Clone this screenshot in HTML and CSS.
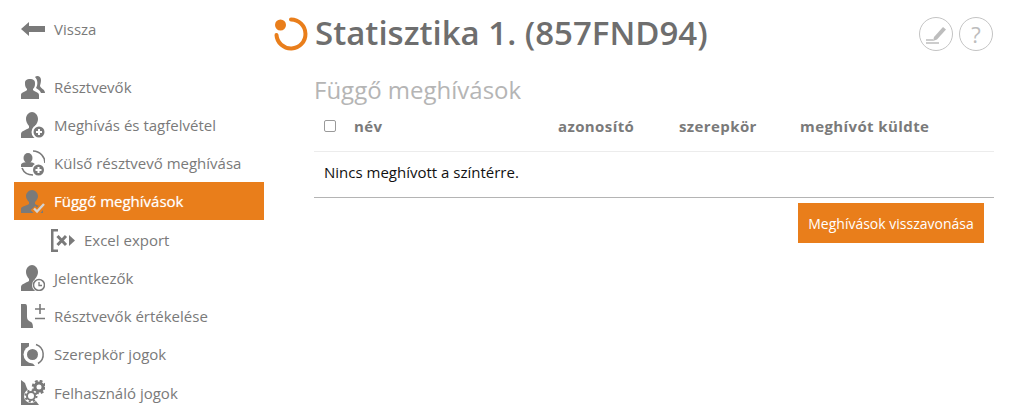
FILE: index.html
```html
<!DOCTYPE html>
<html lang="en">

<head>
    <meta charset="UTF-8">
    <title>Függő meghívások</title>
    <link rel="stylesheet" href="styles.css">
</head>

<body>
    <svg class="defs" width="0" height="0">
        <symbol id="person" viewBox="0 0 24 26">
            <path d="M0 26V22C0 19 5 18 8 16V14C6 12 5 9 5 7C5 3 8 0 11 0S17 3 17 7C17 9 16 12 14 14V16C17 18 22 19 22 22V26Z" />
        </symbol>
    </svg>

    <div class="page">
        <nav class="sidebar">
            <a class="back">
                <svg class="icon" viewBox="0 0 24 26">
                    <path d="M0 13L8 6V10H24V16H8V20Z" />
                </svg>
                Vissza
            </a>

            <ul class="menu">
                <li class="item">
                    <svg class="icon" viewBox="0 0 24 26">
                        <path d="M14 3C16 1 20 2 20 6C20 9 19 11 19 12C20 15 24 15 24 19H20C19 16 16 15 15 14C17 11 17 6 14 3Z" />
                        <path d="M0 25V21C0 18 4 18 6 16V15C4 13 4 11 4 9C4 6 6 5 9 5S14 6 14 9C14 11 14 13 12 15V16C14 18 18 18 18 21V25Z" />
                    </svg>
                    Résztvevők
                </li>
                <li class="item">
                    <svg class="icon" viewBox="0 0 24 26">
                        <use href="#person" />
                        <circle cx="18" cy="20" r="7.5" fill="#fff" />
                        <circle cx="18" cy="20" r="5.5" />
                        <path d="M15 20H21M18 17V23" stroke="#fff" stroke-width="2" />
                    </svg>
                    Meghívás és tagfelvétel
                </li>
                <li class="item">
                    <svg class="icon" viewBox="0 0 24 26">
                        <ellipse cx="7" cy="8" rx="4.500" ry="5" />
                        <path d="M0 17V15C0 13 3 12 7 12S14 13 14 15V17Z" />
                        <path d="M12 1C19 1 24 7 24 13M1 18C3 23 7 25 12 25" fill="none" stroke="#7a7a7a" stroke-width="1.600" />
                        <circle cx="17.500" cy="20" r="7" fill="#fff" />
                        <circle cx="17.500" cy="20" r="5.500" />
                        <path d="M14.500 20H20.500M17.500 17V23" stroke="#fff" stroke-width="2" />
                    </svg>
                    Külső résztvevő meghívása
                </li>
                <li class="item active">
                    <svg class="icon" viewBox="0 0 24 26">
                        <path d="M0 25V21C0 18 5 18 8 16V14C6 12 5 10 5 8C5 5 8 2 11 2S17 5 17 8C17 10 16 12 14 14V16C17 18 22 18 22 21V25Z" />
                        <path d="M12 20L16 24.500L24 15" fill="none" stroke="#e97e1b" stroke-width="6" />
                        <path d="M13 20.500L16 23.500L23 16" fill="none" stroke="#d4d4d4" stroke-width="2.400" />
                    </svg>
                    Függő meghívások
                </li>
                <li class="item sub">
                    <svg class="icon" viewBox="0 0 24 26">
                        <path d="M0 2H7V4.500H2.500V22.500H7V25H0Z" />
                        <path d="M6.500 9L15 18M15 9L6.500 18" fill="none" stroke="#7a7a7a" stroke-width="3" />
                        <path d="M18 8L24 13.500L18 19Z" />
                    </svg>
                    Excel export
                </li>
                <li class="item">
                    <svg class="icon" viewBox="0 0 24 26">
                        <use href="#person" />
                        <circle cx="18" cy="20" r="7" fill="#fff" />
                        <circle cx="18" cy="20" r="5.5" fill="#fff" stroke="#7a7a7a" stroke-width="1.5" />
                        <path d="M18 17V20.500H21" fill="none" stroke="#7a7a7a" stroke-width="1.3" />
                    </svg>
                    Jelentkezők
                </li>
                <li class="item">
                    <svg class="icon" viewBox="0 0 24 26">
                        <path d="M0 1H4C6 1 6 3 6 5V14C6 17 8 18 10 19C12 20 12 24 12 25H0Z" />
                        <path d="M14 6H24M19 1V11M14 15.500H24" fill="none" stroke="#7a7a7a" stroke-width="1.600" />
                    </svg>
                    Résztvevők értékelése
                </li>
                <li class="item">
                    <svg class="icon" viewBox="0 0 24 26">
                        <path d="M0 2H8V18L14 25H0Z" />
                        <circle cx="11.500" cy="13.500" r="9" fill="#fff" />
                        <circle cx="11.500" cy="13.500" r="5.500" />
                        <path d="M15 3.500A10.500 10.500 0 0 1 17 22.500" fill="none" stroke="#7a7a7a" stroke-width="1.500" />
                    </svg>
                    Szerepkör jogok
                </li>
                <li class="item">
                    <svg class="icon" viewBox="0 0 24 26">
                        <path d="M0 0L4 3C5 6 6 9 8 12L18 25H0Z" />
                        <circle cx="10" cy="16" r="7" fill="#fff" />
                        <circle cx="10" cy="16" r="4" fill="none" stroke="#7a7a7a" stroke-width="2" />
                        <circle cx="10" cy="16" r="5.500" fill="none" stroke="#7a7a7a" stroke-width="2" stroke-dasharray="2 2.320" />
                        <circle cx="18" cy="7" r="4" fill="none" stroke="#7a7a7a" stroke-width="3" />
                        <circle cx="18" cy="7" r="6" fill="none" stroke="#7a7a7a" stroke-width="2.500" stroke-dasharray="2.700 2.010" />
                    </svg>
                    Felhasználó jogok
                </li>
            </ul>
        </nav>

        <main class="content">
            <header class="title-row">
                <svg class="logo" viewBox="0 0 34 34">
                    <path d="M17 2.500A14.500 14.500 0 1 1 2.500 18" fill="none" stroke="#e97e1b" stroke-width="4" stroke-linecap="round" />
                    <circle cx="6.500" cy="8" r="5.500" fill="#e97e1b" />
                </svg>
                <h1>Statisztika 1. (857FND94)</h1>
                <div class="tools">
                    <span class="round-btn">
                        <svg viewBox="0 0 24 24" width="24" height="24">
                            <path d="M10 15L19 5L22 7.500L13 17.500L9 19Z" fill="#bdbdbd" />
                            <path d="M2 18H9M2 21H15" stroke="#bdbdbd" stroke-width="1.500" />
                        </svg>
                    </span>
                    <span class="round-btn help">?</span>
                </div>
            </header>

            <h2>Függő meghívások</h2>

            <div class="table">
                <div class="row head">
                    <div class="col-check"><span class="checkbox"></span></div>
                    <div class="col-name">név</div>
                    <div class="col-id">azonosító</div>
                    <div class="col-role">szerepkör</div>
                    <div>meghívót küldte</div>
                </div>
                <div class="empty">Nincs meghívott a színtérre.</div>
            </div>

            <div class="actions">
                <button>Meghívások visszavonása</button>
            </div>
        </main>
    </div>
</body>

</html>
```

FILE: styles.css
```css
* {
    box-sizing: border-box;
    margin: 0;
    padding: 0;
}

body {
    background-color: #fff;
    font-family: "Open Sans", sans-serif;
    font-size: 15px;
    color: #7a7a7a;
    height: 415px;
    overflow: hidden;
}

.defs {
    display: block;
    height: 0;
}

.page {
    display: flex;
}

.sidebar {
    width: 264px;
    padding-left: 14px;
    flex-shrink: 0;
}

.icon {
    width: 24px;
    height: 26px;
    fill: #7a7a7a;
    flex-shrink: 0;
}

.back {
    display: flex;
    align-items: center;
    gap: 9px;
    height: 38px;
    margin-top: 10px;
    padding-left: 7px;
}

.menu {
    list-style: none;
    margin-top: 19.4px;
}

.item {
    display: flex;
    align-items: center;
    gap: 9px;
    height: 38.25px;
    padding-left: 7px;
}

.item.active {
    background-color: #e97e1b;
    color: #fff;
    text-shadow: 0 0 1px rgba(255, 255, 255, 0.6);
}

.item.sub {
    padding-left: 37px;
}

.content {
    flex: 1;
    padding-left: 10px;
    padding-right: 32px;
}

.title-row {
    display: flex;
    align-items: center;
    height: 68px;
}

.logo {
    width: 34px;
    height: 34px;
    flex-shrink: 0;
}

h1 {
    font-size: 33px;
    font-weight: 600;
    color: #6e6e6e;
    margin-left: 7px;
    padding-bottom: 3px;
}

.tools {
    display: flex;
    gap: 6px;
    margin-left: auto;
    margin-right: 1px;
}

.round-btn {
    width: 34px;
    height: 34px;
    border: 1px solid #c4c4c4;
    border-radius: 50%;
    display: flex;
    align-items: center;
    justify-content: center;
}

.help {
    font-size: 22px;
    color: #bdbdbd;
}

h2 {
    font-size: 24px;
    font-weight: 400;
    color: #b5b5b5;
    margin-left: 40px;
    line-height: 32px;
    margin-top: 6px;
}

.table {
    margin-left: 40px;
    border-bottom: 1px solid #b4b4b4;
}

.row {
    display: flex;
    align-items: center;
}

.head {
    height: 46px;
    border-bottom: 1px solid #ececec;
    font-weight: 700;
    letter-spacing: 0.4px;
    padding-bottom: 5px;
}

.col-check {
    width: 40px;
    padding-left: 10px;
    display: flex;
}

.checkbox {
    width: 12px;
    height: 12px;
    border: 1px solid #9a9a9a;
    border-radius: 2px;
    background-color: #fff;
}

.col-name {
    width: 204px;
}

.col-id {
    width: 121px;
}

.col-role {
    width: 121px;
}

.empty {
    height: 45px;
    padding-left: 10px;
    line-height: 41px;
    color: #111;
}

.actions {
    display: flex;
    justify-content: flex-end;
    margin-top: 5px;
    padding-right: 10px;
}

button {
    width: 186px;
    height: 40px;
    border: none;
    background-color: #e97e1b;
    color: #fff;
    font-family: "Open Sans", sans-serif;
    font-size: 14px;
}
```
